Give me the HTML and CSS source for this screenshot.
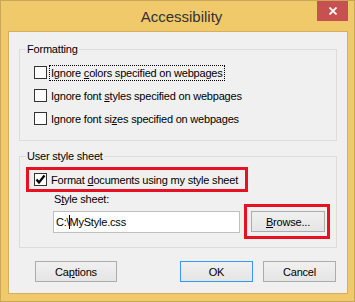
FILE: index.html
```html
<!DOCTYPE html>
<html lang="en">
<head>
    <meta charset="UTF-8">
    <title>Accessibility</title>
    <link rel="stylesheet" href="styles.css">
</head>
<body>
    <div class="window">
        <div class="titlebar">
            <span></span>
            <div class="title">Accessibility</div>
            <div class="close">
                <svg width="8" height="8" viewBox="0 0 8 8">
                    <path d="M0.5 0.5 L7.5 7.5 M7.5 0.5 L0.5 7.5" stroke="#fff" stroke-width="1.8" fill="none"/>
                </svg>
            </div>
        </div>

        <div class="client">
            <fieldset class="group group-formatting">
                <legend>Formatting</legend>
                <div class="options">
                    <label class="option">
                        <span class="box"></span>
                        <span class="text focused">Ignore <u>c</u>olors specified on webpages</span>
                    </label>
                    <label class="option">
                        <span class="box"></span>
                        <span class="text">Ignore font <u>s</u>tyles specified on webpages</span>
                    </label>
                    <label class="option">
                        <span class="box"></span>
                        <span class="text">Ignore font si<u>z</u>es specified on webpages</span>
                    </label>
                </div>
            </fieldset>

            <fieldset class="group group-user">
                <legend>User style sheet</legend>
                <div class="highlight highlight-option">
                    <label class="option">
                        <span class="box">
                            <svg width="11" height="11" viewBox="0 0 11 11">
                                <polyline points="1.5,5.5 4,8.5 9.5,1.5" stroke="#000" stroke-width="2.2" fill="none"/>
                            </svg>
                        </span>
                        <span class="text">Format <u>d</u>ocuments using my style sheet</span>
                    </label>
                </div>
                <div class="sheet">
                    <div class="sheet-label">S<u>t</u>yle sheet:</div>
                    <div class="sheet-row">
                        <div class="textbox">C:\<span class="caret"></span>MyStyle.css</div>
                        <div class="highlight highlight-button">
                            <button type="button" class="btn"><u>B</u>rowse...</button>
                        </div>
                    </div>
                </div>
            </fieldset>

            <div class="actions">
                <button type="button" class="btn btn-wide">Ca<u>p</u>tions</button>
                <span class="spacer"></span>
                <button type="button" class="btn btn-default">OK</button>
                <button type="button" class="btn">Cancel</button>
            </div>
        </div>
    </div>
</body>
</html>
```

FILE: styles.css
```css
body {
    margin: 0;
    font-family: "Liberation Sans", Arial, sans-serif;
    font-size: 11px;
    letter-spacing: -0.2px;
    color: #000;
}

.window {
    width: 355px;
    height: 302px;
    box-sizing: border-box;
    background-color: #f0c96b;
    border: 1px solid #c9a659;
    padding: 0 6px 7px 7px;
}

.titlebar {
    height: 30px;
    display: grid;
    grid-template-columns: 1fr auto 1fr;
    align-items: center;
}

.title {
    font-size: 15px;
    letter-spacing: 0;
    color: #333;
    margin-left: 7px;
}

.close {
    justify-self: end;
    align-self: start;
    width: 31px;
    height: 20px;
    background-color: #c75050;
    display: flex;
    align-items: center;
    justify-content: center;
}

.client {
    height: 263px;
    box-sizing: border-box;
    background-color: #f0f0f0;
    border: 1px solid #d6ae5e;
    padding-top: 10px;
}

.group {
    margin: 0 10px;
    padding: 0;
    border: 1px solid #dcdcdc;
    min-width: 0;
}

.group legend {
    margin-left: 6px;
    padding: 0 1px;
    line-height: 14px;
}

.options {
    padding: 5px 0 10px 14px;
}

.option {
    display: flex;
    align-items: center;
    height: 23px;
}

.box {
    width: 13px;
    height: 13px;
    box-sizing: border-box;
    border: 1px solid #333;
    background-color: #fff;
    display: flex;
    align-items: center;
    justify-content: center;
    flex: none;
}

.text {
    margin-left: 2px;
    padding: 0 1px;
    line-height: 14px;
    border: 1px solid transparent;
}

.text.focused {
    border: 1px dotted #000;
}

.group-user {
    margin-top: 8px;
    padding-bottom: 8px;
}

.highlight {
    border: 3px solid #e81123;
}

.highlight-option {
    display: inline-block;
    margin: 4px 0 0 6px;
    padding: 0 5px 0 5px;
}

.highlight-option .option {
    height: 19px;
}

.sheet {
    padding-left: 33px;
}

.sheet-label {
    line-height: 14px;
    padding-left: 1px;
}

.sheet-row {
    display: flex;
    align-items: center;
    gap: 4px;
    margin-top: -2px;
}

.textbox {
    width: 187px;
    height: 22px;
    box-sizing: border-box;
    border: 1px solid #c0c0c0;
    background-color: #fff;
    padding-left: 2px;
    line-height: 20px;
}

.caret {
    display: inline-block;
    width: 1px;
    height: 14px;
    margin-right: -1px;
    background-color: #000;
    vertical-align: -3px;
}

.highlight-button {
    padding: 4px 2px 4px 4px;
    display: flex;
}

.btn {
    width: 74px;
    height: 21px;
    box-sizing: border-box;
    border: 1px solid #acacac;
    background: linear-gradient(#f0f0f0, #e5e5e5);
    font-family: inherit;
    font-size: 11px;
    letter-spacing: inherit;
    color: #000;
    padding: 0;
    margin: 0;
}

.actions {
    display: flex;
    gap: 10px;
    margin: 13px 11px 0 26px;
}

.btn-wide {
    width: 82px;
}

.btn-default {
    width: 73px;
    border-color: #3399ff;
}

.actions .btn:last-child {
    width: 73px;
}

.spacer {
    flex: 1;
}
```
